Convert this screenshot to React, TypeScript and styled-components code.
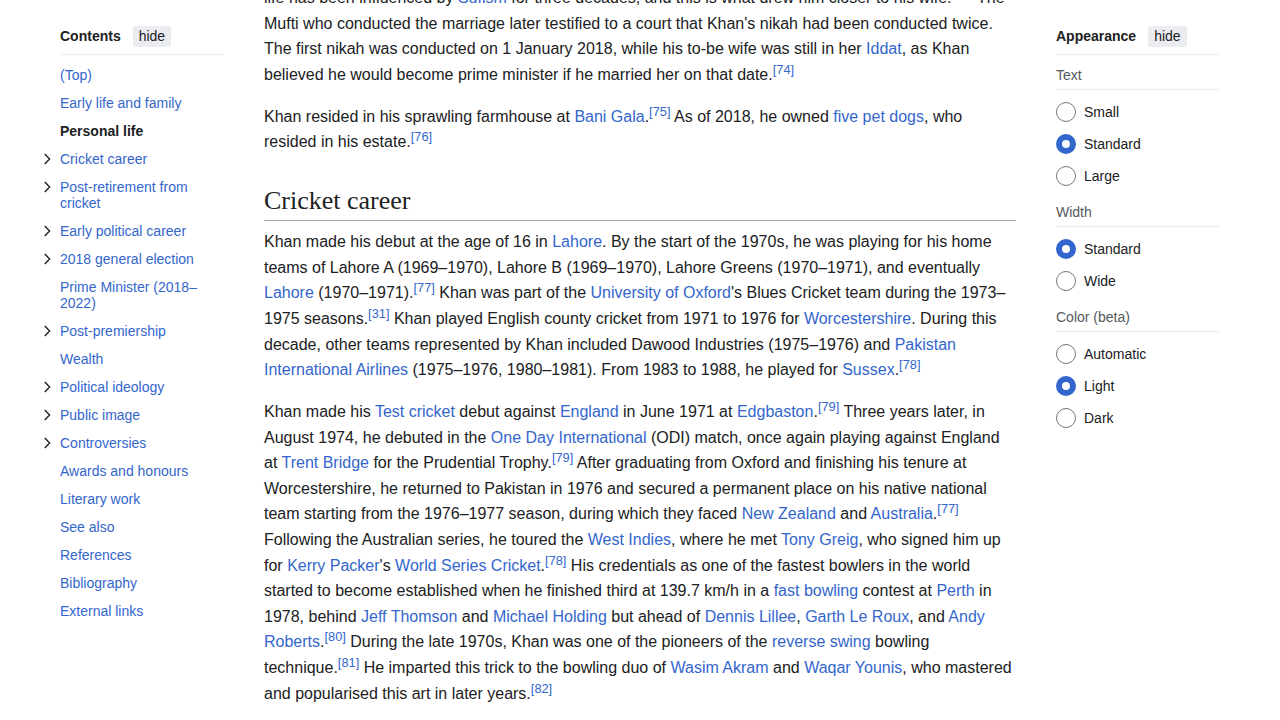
import React from "react";
import styled, { createGlobalStyle } from "styled-components";

const Global = createGlobalStyle`
  html, body { margin: 0; padding: 0; background: #fff; }
  body { font-family: "Liberation Sans", Arial, sans-serif; color: #202122; overflow: hidden; }
  * { box-sizing: border-box; }
`;

const Page = styled.div`
  display: flex;
  align-items: flex-start;
  gap: 40px;
  padding-left: 40px;
  width: 1280px;
  height: 720px;
  overflow: hidden;
`;

const LeftCol = styled.nav`
  width: 184px;
  flex: none;
  padding-top: 25px;
`;

const RightCol = styled.aside`
  width: 164px;
  flex: none;
  padding-top: 25px;
`;

const SideHeader = styled.div<{ $indent?: boolean }>`
  display: flex;
  align-items: center;
  gap: 12px;
  margin-left: ${(p) => (p.$indent ? "20px" : "0")};
  height: 22px;
  box-sizing: content-box;
  padding-bottom: 7px;
  border-bottom: 1px solid #eaecf0;
`;

const SideTitle = styled.span`
  font-size: 14px;
  font-weight: bold;
  color: #202122;
`;

const HideButton = styled.button`
  font-family: "Liberation Sans", Arial, sans-serif;
  font-size: 14px;
  color: #202122;
  background: #eaecf0;
  border: none;
  border-radius: 2px;
  height: 21px;
  padding: 0 6px;
  line-height: 21px;
  cursor: pointer;
`;

const TocList = styled.ul`
  list-style: none;
  margin: 0;
  padding: 6px 0 0;
`;

const TocItem = styled.li`
  display: flex;
  align-items: flex-start;
  padding: 6px 0;
  font-size: 14px;
  line-height: 16px;
`;

const Gutter = styled.span`
  width: 20px;
  flex: none;
  height: 16px;
  display: flex;
  align-items: center;
  padding-left: 1px;
`;

const TocLink = styled.a<{ $active?: boolean }>`
  color: ${(p) => (p.$active ? "#202122" : "#3366cc")};
  font-weight: ${(p) => (p.$active ? "bold" : "normal")};
  text-decoration: none;
`;

const Main = styled.main`
  width: 752px;
  flex: none;
  margin-top: -15px;
  font-size: 16px;
  line-height: 25.6px;
`;

const Para = styled.p`
  margin: 0 0 16.4px;
`;

const Link = styled.a`
  color: #3366cc;
  text-decoration: none;
`;

const Sup = styled.sup`
  font-size: 80%;
  line-height: 1;
  color: #3366cc;
`;

const H2 = styled.h2`
  font-family: "Liberation Serif", "Times New Roman", serif;
  font-weight: normal;
  font-size: 26px;
  line-height: 33px;
  margin: 28.6px 0 8.4px;
  padding-bottom: 3.2px;
  border-bottom: 1px solid #a2a9b1;
  color: #202122;
`;

const GroupLabel = styled.div`
  font-size: 14px;
  line-height: 20px;
  color: #54595d;
  padding: 10px 0 4px;
  border-bottom: 1px solid #eaecf0;
`;

const RadioList = styled.div`
  padding-top: 6px;
`;

const RadioRow = styled.label`
  display: flex;
  align-items: center;
  gap: 8px;
  height: 32px;
  font-size: 14px;
  color: #202122;
`;

const RadioCircle = styled.span<{ $checked?: boolean }>`
  width: 20px;
  height: 20px;
  border-radius: 50%;
  flex: none;
  background: #fff;
  border: ${(p) => (p.$checked ? "6px solid #3366cc" : "1px solid #72777d")};
`;

const Chevron = () => (
  <svg width="12" height="12" viewBox="0 0 12 12" aria-hidden>
    <path d="M3.8 1 L8.6 6 L3.8 11" fill="none" stroke="#202122" strokeWidth="1.4" />
  </svg>
);

const toc: { label: string; exp?: boolean; active?: boolean }[] = [
  { label: "(Top)" },
  { label: "Early life and family" },
  { label: "Personal life", active: true },
  { label: "Cricket career", exp: true },
  { label: "Post-retirement from cricket", exp: true },
  { label: "Early political career", exp: true },
  { label: "2018 general election", exp: true },
  { label: "Prime Minister (2018–2022)" },
  { label: "Post-premiership", exp: true },
  { label: "Wealth" },
  { label: "Political ideology", exp: true },
  { label: "Public image", exp: true },
  { label: "Controversies", exp: true },
  { label: "Awards and honours" },
  { label: "Literary work" },
  { label: "See also" },
  { label: "References" },
  { label: "Bibliography" },
  { label: "External links" },
];

const groups: { label: string; options: string[]; checked: number }[] = [
  { label: "Text", options: ["Small", "Standard", "Large"], checked: 1 },
  { label: "Width", options: ["Standard", "Wide"], checked: 0 },
  { label: "Color (beta)", options: ["Automatic", "Light", "Dark"], checked: 1 },
];

const L = ({ children }: { children: React.ReactNode }) => <Link href="#">{children}</Link>;
const R = ({ n }: { n: number }) => <Sup>{"\u2060"}[{n}]</Sup>;

export default function App() {
  return (
    <>
      <Global />
      <Page>
        <LeftCol>
          <SideHeader $indent>
            <SideTitle>Contents</SideTitle>
            <HideButton>hide</HideButton>
          </SideHeader>
          <TocList>
            {toc.map((t) => (
              <TocItem key={t.label}>
                <Gutter>{t.exp && <Chevron />}</Gutter>
                <TocLink href="#" $active={t.active}>
                  {t.label}
                </TocLink>
              </TocItem>
            ))}
          </TocList>
        </LeftCol>

        <Main>
          <Para>
            life has been influenced by <L>Sufism</L> for three decades, and this is what drew him closer to
            his wife.<R n={73} /> The Mufti who conducted the marriage later testified to a court that Khan's
            nikah had been conducted twice. The first nikah was conducted on 1 January 2018, while his to-be
            wife was still in her <L>Iddat</L>, as Khan believed he would become prime minister if he married
            her on that date.<R n={74} />
          </Para>
          <Para>
            Khan resided in his sprawling farmhouse at <L>Bani Gala</L>.<R n={75} /> As of 2018, he owned{" "}
            <L>five pet dogs</L>, who resided in his estate.<R n={76} />
          </Para>
          <H2>Cricket career</H2>
          <Para>
            Khan made his debut at the age of 16 in <L>Lahore</L>. By the start of the 1970s, he was playing for
            his home teams of Lahore A (1969–1970), Lahore B (1969–1970), Lahore Greens (1970–1971), and
            eventually <L>Lahore</L> (1970–1971).<R n={77} /> Khan was part of the <L>University of Oxford</L>'s
            Blues Cricket team during the 1973–1975 seasons.<R n={31} /> Khan played English county cricket
            from 1971 to 1976 for <L>Worcestershire</L>. During this decade, other teams represented by Khan
            included Dawood Industries (1975–1976) and <L>Pakistan International Airlines</L> (1975–1976,
            1980–1981). From 1983 to 1988, he played for <L>Sussex</L>.<R n={78} />
          </Para>
          <Para>
            Khan made his <L>Test cricket</L> debut against <L>England</L> in June 1971 at <L>Edgbaston</L>.
            <R n={79} /> Three years later, in August 1974, he debuted in the <L>One Day International</L> (ODI)
            match, once again playing against England at <L>Trent Bridge</L> for the Prudential Trophy.
            <R n={79} /> After graduating from Oxford and finishing his tenure at Worcestershire, he returned to
            Pakistan in 1976 and secured a permanent place on his native national team starting from the
            1976–1977 season, during which they faced <L>New Zealand</L> and <L>Australia</L>.<R n={77} />{" "}
            Following the Australian series, he toured the <L>West Indies</L>, where he met <L>Tony Greig</L>,
            who signed him up for <L>Kerry Packer</L>'s <L>World Series Cricket</L>.<R n={78} /> His credentials
            as one of the fastest bowlers in the world started to become established when he finished third at
            139.7 km/h in a <L>fast bowling</L> contest at <L>Perth</L> in 1978, behind <L>Jeff Thomson</L> and{" "}
            <L>Michael Holding</L> but ahead of <L>Dennis Lillee</L>, <L>Garth Le Roux</L>, and{" "}
            <L>Andy Roberts</L>.<R n={80} /> During the late 1970s, Khan was one of the pioneers of the{" "}
            <L>reverse swing</L> bowling technique.<R n={81} /> He imparted this trick to the bowling duo of{" "}
            <L>Wasim Akram</L> and <L>Waqar Younis</L>, who mastered and popularised this art in later years.
            <R n={82} />
          </Para>
        </Main>

        <RightCol>
          <SideHeader>
            <SideTitle>Appearance</SideTitle>
            <HideButton>hide</HideButton>
          </SideHeader>
          {groups.map((g) => (
            <div key={g.label}>
              <GroupLabel>{g.label}</GroupLabel>
              <RadioList>
                {g.options.map((o, i) => (
                  <RadioRow key={o}>
                    <RadioCircle $checked={i === g.checked} />
                    {o}
                  </RadioRow>
                ))}
              </RadioList>
            </div>
          ))}
        </RightCol>
      </Page>
    </>
  );
}
